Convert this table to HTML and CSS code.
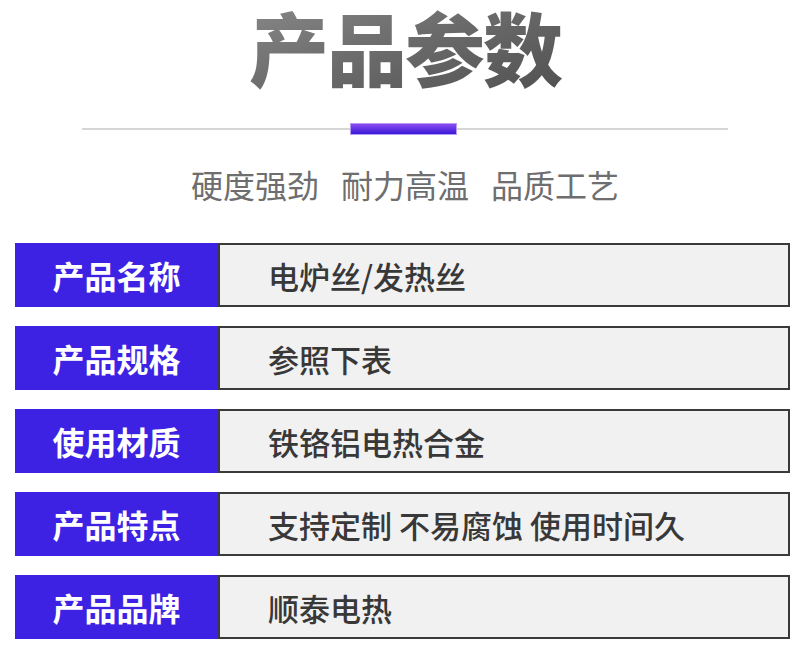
FILE: index.html
```html
<!DOCTYPE html>
<html lang="zh-CN">
<head>
<meta charset="utf-8">
<title>产品参数</title>
<link rel="stylesheet" href="styles.css">
</head>
<body>
<header class="head">
  <h1 class="title">产品参数</h1>
  <div class="divider"><div class="divider-bar"></div></div>
  <p class="subtitle"><span>硬度强劲</span><span>耐力高温</span><span>品质工艺</span></p>
</header>
<section class="params">
  <div class="row"><div class="label">产品名称</div><div class="value">电炉丝/发热丝</div></div>
  <div class="row"><div class="label">产品规格</div><div class="value">参照下表</div></div>
  <div class="row"><div class="label">使用材质</div><div class="value">铁铬铝电热合金</div></div>
  <div class="row"><div class="label">产品特点</div><div class="value">支持定制 不易腐蚀 使用时间久</div></div>
  <div class="row"><div class="label">产品品牌</div><div class="value">顺泰电热</div></div>
</section>
</body>
</html>
```

FILE: styles.css
```css
* { box-sizing: border-box; }
html, body { margin: 0; padding: 0; background: #ffffff; }
body {
  width: 800px;
  height: 653px;
  overflow: hidden;
  font-family: "Noto Sans CJK SC", "Noto Sans", sans-serif;
}
.head {
  display: flex;
  flex-direction: column;
  align-items: flex-start;
}
.title {
  margin: 0;
  padding: 4px 6px;
  align-self: center;
  margin-left: 10px;
  font-size: 80px;
  line-height: 90px;
  font-weight: 900;
  letter-spacing: -2px;
  background: linear-gradient(160deg, #8a8a8a 0%, #6a6a6a 50%, #505050 100%);
  -webkit-background-clip: text;
  background-clip: text;
  color: transparent;
  margin-top: -4px;
}
.divider {
  margin-top: 29px;
  margin-left: 82px;
  width: 646px;
  height: 12px;
  background: linear-gradient(#d6d6d6, #d6d6d6) center / 100% 2px no-repeat;
  display: flex;
}
.divider-bar {
  margin-left: 268px;
  width: 107px;
  height: 12px;
  background: linear-gradient(#8c4cf0, #3a1ad8);
  border: 1px solid #b79af5;
}
.subtitle {
  margin: 29px 0 0 0;
  align-self: center;
  margin-left: 10px;
  display: flex;
  gap: 22px;
  font-size: 32px;
  line-height: 40px;
  color: #6e6e6e;
  font-weight: 400;
}
.params {
  margin-top: 39px;
  padding: 0 10px 0 15px;
  display: flex;
  flex-direction: column;
  gap: 19px;
}
.row {
  display: flex;
  height: 64px;
}
.label {
  width: 203px;
  flex: none;
  background: #3d22e3;
  color: #ffffff;
  font-size: 32px;
  font-weight: 700;
  display: flex;
  align-items: center;
  justify-content: center;
}
.value {
  flex: 1;
  background: #f1f1f1;
  border: 2px solid #3a3a3a;
  color: #383838;
  font-size: 31px;
  font-weight: 500;
  display: flex;
  align-items: center;
  padding-left: 48px;
}
```
